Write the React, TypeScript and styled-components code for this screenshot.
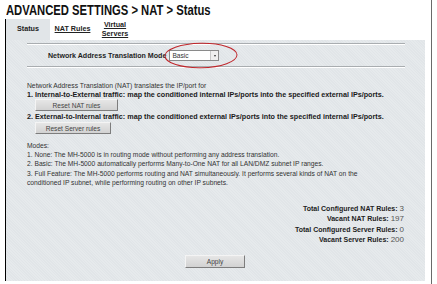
import styled, { createGlobalStyle } from "styled-components";

const GlobalStyle = createGlobalStyle`
  html, body {
    margin: 0;
    padding: 0;
    background: #ffffff;
  }
  body {
    font-family: "Liberation Sans", Arial, sans-serif;
    color: #1e1e1e;
  }
`;

const Page = styled.div`
  position: relative;
  width: 432px;
  height: 284px;
  border-right: 1px solid #6a6a6a;
  box-sizing: border-box;
  overflow: hidden;
`;

const Title = styled.h1`
  margin: 0 0 2px 6px;
  padding-top: 2px;
  font-size: 15px;
  line-height: 15px;
  font-weight: 700;
  color: #111;
  white-space: nowrap;
  transform: scaleX(0.75);
  transform-origin: left center;
`;

const Frame = styled.div`
  margin-left: 5px;
  width: 419px;
  border-left: 1px solid #000;
`;

const TabRow = styled.div`
  display: flex;
  height: 21px;
`;

const Tab = styled.div<{ $active?: boolean; $width: number }>`
  width: ${(p) => p.$width}px;
  display: flex;
  align-items: center;
  justify-content: center;
  flex-direction: column;
  box-sizing: border-box;
  background: ${(p) => (p.$active ? "#e1e5e8" : "#ffffff")};
  font-size: 7.2px;
  line-height: 8.5px;
  font-weight: 700;
  color: #222;
  text-decoration: ${(p) => (p.$active ? "none" : "underline")};
`;

const Panel = styled.div`
  position: relative;
  height: 241px;
  box-sizing: border-box;
  padding: 3px 20px 0 21px;
  background-color: #e1e5e8;
  background-image: repeating-linear-gradient(
    45deg,
    rgba(255, 255, 255, 0.18) 0 1px,
    transparent 1px 2px
  );
`;

const Separator = styled.div`
  height: 0;
  border-top: 1px solid #a9adb0;
  border-bottom: 1px solid #ffffff;
`;

const ModeRow = styled.div`
  display: flex;
  align-items: center;
  height: 21px;
  padding-left: 21px;
  gap: 3px;
`;

const ModeLabel = styled.span`
  font-size: 7.1px;
  font-weight: 700;
  white-space: nowrap;
`;

const Select = styled.div`
  width: 50px;
  height: 11px;
  box-sizing: border-box;
  border: 1px solid #8a8a8a;
  background: #fff;
  display: flex;
  align-items: center;
  justify-content: space-between;
  padding-left: 2px;
  font-size: 6.6px;
  color: #333;
`;

const SelectArrow = styled.span`
  width: 8px;
  height: 9px;
  box-sizing: border-box;
  border-left: 1px solid #c8c8c8;
  background: #efefef;
  display: flex;
  align-items: center;
  justify-content: center;

  &::after {
    content: "";
    border-left: 1.5px solid transparent;
    border-right: 1.5px solid transparent;
    border-top: 2px solid #333;
  }
`;

const Ellipse = styled.svg`
  position: absolute;
  left: 157px;
  top: 2px;
  width: 76px;
  height: 27px;
  overflow: visible;
`;

const Text = styled.div<{ $top?: number; $bold?: boolean }>`
  margin-top: ${(p) => p.$top ?? 0}px;
  font-size: ${(p) => (p.$bold ? 7.2 : 6.75)}px;
  font-weight: ${(p) => (p.$bold ? 700 : 400)};
  line-height: 9px;
  white-space: nowrap;
  color: ${(p) => (p.$bold ? "#1a1a1a" : "#333")};
`;

const Modes = styled.div`
  margin-top: 7px;
  font-size: 6.7px;
  line-height: 9.2px;
  white-space: nowrap;
  color: #333;
`;

const ActionButton = styled.button<{ $width: number; $top?: number }>`
  display: block;
  width: ${(p) => p.$width}px;
  height: 12px;
  margin: ${(p) => p.$top ?? 0}px 0 0 8px;
  padding: 0;
  box-sizing: border-box;
  font-family: inherit;
  font-size: 6.6px;
  color: #444;
  background: linear-gradient(#e6e6e6, #d2d2d2);
  border: 1px solid;
  border-color: #f4f4f4 #7d7d7d #7d7d7d #f4f4f4;
`;

const Stats = styled.div`
  margin-top: 16.5px;
  display: flex;
  flex-direction: column;
  align-items: flex-end;
  padding-right: 1px;
`;

const StatRow = styled.div`
  height: 10.3px;
  display: flex;
  align-items: center;
  gap: 2px;
`;

const StatLabel = styled.span`
  font-size: 7px;
  font-weight: 700;
  color: #222;
`;

const StatValue = styled.span`
  font-size: 8px;
  font-weight: 400;
  color: #555;
`;

const ApplyRow = styled.div`
  margin-top: 10px;
  display: flex;
  justify-content: center;
`;

const ApplyButton = styled(ActionButton)`
  margin: 0 0 0 -2px;
  height: 13px;
`;

const stats = [
  { label: "Total Configured NAT Rules:", value: "3" },
  { label: "Vacant NAT Rules:", value: "197" },
  { label: "Total Configured Server Rules:", value: "0" },
  { label: "Vacant Server Rules:", value: "200" },
];

export default function App() {
  return (
    <>
      <GlobalStyle />
      <Page>
        <Title>ADVANCED SETTINGS &gt; NAT &gt; Status</Title>
        <Frame>
          <TabRow>
            <Tab $active $width={44}>
              Status
            </Tab>
            <Tab $width={45}>NAT Rules</Tab>
            <Tab $width={40}>
              <span>Virtual</span>
              <span>Servers</span>
            </Tab>
          </TabRow>
          <Panel>
            <Separator />
            <ModeRow>
              <ModeLabel>Network Address Translation Mode</ModeLabel>
              <Select>
                Basic
                <SelectArrow />
              </Select>
            </ModeRow>
            <Ellipse viewBox="0 0 76 27">
              <ellipse
                cx="38"
                cy="13.5"
                rx="36"
                ry="12.2"
                fill="none"
                stroke="#c0262b"
                strokeWidth="1"
                transform="rotate(-1 38 13.5)"
              />
            </Ellipse>
            <Separator />
            <Text $top={13}>
              Network Address Translation (NAT) translates the IP/port for
            </Text>
            <Text $bold>
              1. Internal-to-External traffic: map the conditioned internal
              IPs/ports into the specified external IPs/ports.
            </Text>
            <ActionButton $width={83}>Reset NAT rules</ActionButton>
            <Text $bold $top={1}>
              2. External-to-Internal traffic: map the conditioned external
              IPs/ports into the specified internal IPs/ports.
            </Text>
            <ActionButton $width={76} $top={1}>
              Reset Server rules
            </ActionButton>
            <Modes>
              <div>Modes:</div>
              <div>
                1. None: The MH-5000 is in routing mode without performing any
                address translation.
              </div>
              <div>
                2. Basic: The MH-5000 automatically performs Many-to-One NAT for
                all LAN/DMZ subnet IP ranges.
              </div>
              <div>
                3. Full Feature: The MH-5000 performs routing and NAT
                simultaneously. It performs several kinds of NAT on the
              </div>
              <div>
                conditioned IP subnet, while performing routing on other IP
                subnets.
              </div>
            </Modes>
            <Stats>
              {stats.map((s) => (
                <StatRow key={s.label}>
                  <StatLabel>{s.label}</StatLabel>
                  <StatValue>{s.value}</StatValue>
                </StatRow>
              ))}
            </Stats>
            <ApplyRow>
              <ApplyButton $width={60}>Apply</ApplyButton>
            </ApplyRow>
          </Panel>
        </Frame>
      </Page>
    </>
  );
}
